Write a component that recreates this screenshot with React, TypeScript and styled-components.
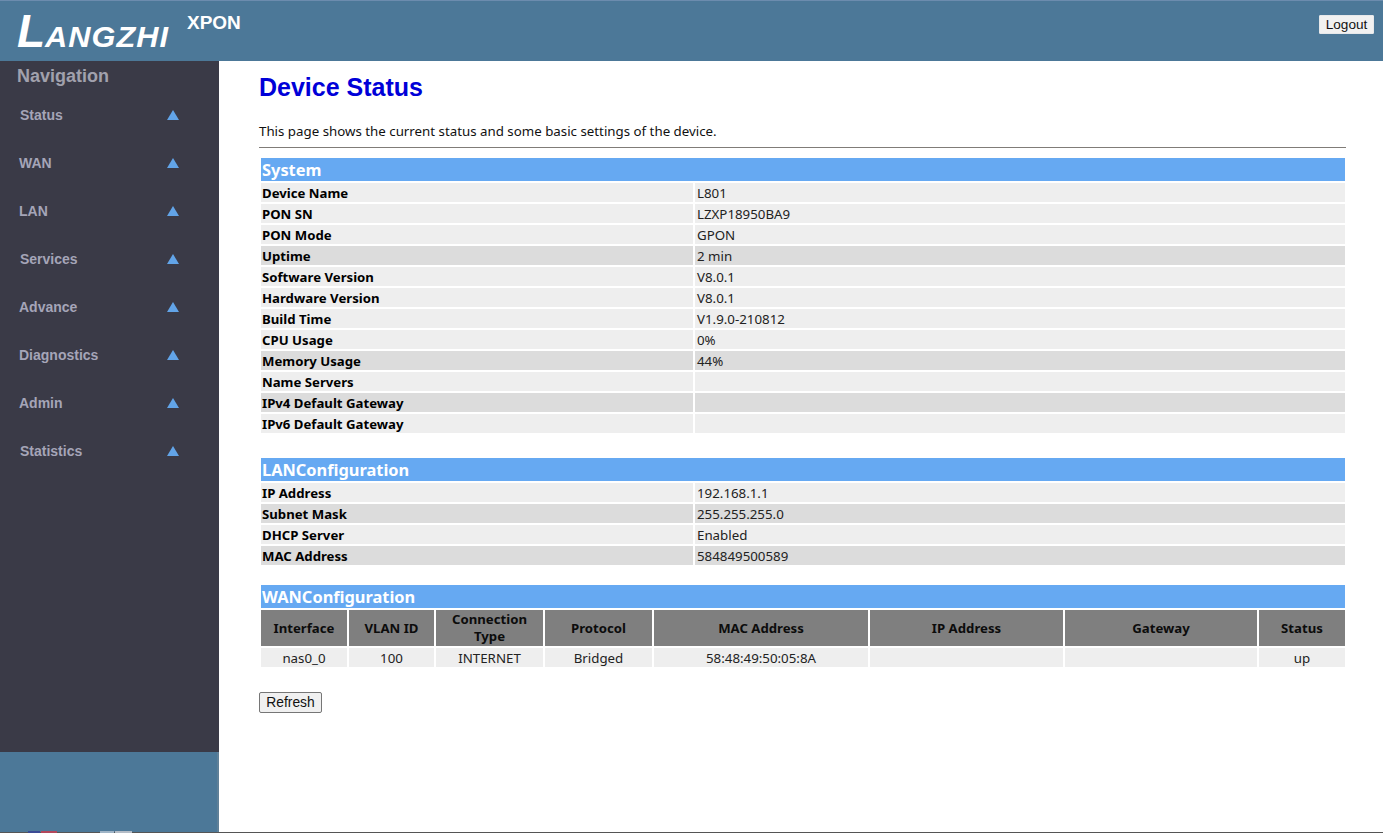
import React from 'react'
import styled, { createGlobalStyle } from 'styled-components'

const GlobalStyle = createGlobalStyle`
  html, body {
    margin: 0;
    padding: 0;
    height: 100%;
    background: #fff;
    overflow: hidden;
  }
`

const menuItems: { label: string; indent: number }[] = [
  { label: 'Status', indent: 20 },
  { label: 'WAN', indent: 19 },
  { label: 'LAN', indent: 19 },
  { label: 'Services', indent: 20 },
  { label: 'Advance', indent: 19 },
  { label: 'Diagnostics', indent: 19 },
  { label: 'Admin', indent: 19 },
  { label: 'Statistics', indent: 20 },
]

type Row = { name: string; value: string; dark?: boolean }

const systemRows: Row[] = [
  { name: 'Device Name', value: 'L801' },
  { name: 'PON SN', value: 'LZXP18950BA9' },
  { name: 'PON Mode', value: 'GPON' },
  { name: 'Uptime', value: '2 min', dark: true },
  { name: 'Software Version', value: 'V8.0.1' },
  { name: 'Hardware Version', value: 'V8.0.1' },
  { name: 'Build Time', value: 'V1.9.0-210812' },
  { name: 'CPU Usage', value: '0%' },
  { name: 'Memory Usage', value: '44%', dark: true },
  { name: 'Name Servers', value: '' },
  { name: 'IPv4 Default Gateway', value: '', dark: true },
  { name: 'IPv6 Default Gateway', value: '' },
]

const lanRows: Row[] = [
  { name: 'IP Address', value: '192.168.1.1' },
  { name: 'Subnet Mask', value: '255.255.255.0', dark: true },
  { name: 'DHCP Server', value: 'Enabled' },
  { name: 'MAC Address', value: '584849500589', dark: true },
]

const wanColumns = [
  { title: 'Interface', width: 86, value: 'nas0_0' },
  { title: 'VLAN ID', width: 85, value: '100' },
  { title: 'Connection Type', width: 107, value: 'INTERNET' },
  { title: 'Protocol', width: 107, value: 'Bridged' },
  { title: 'MAC Address', width: 214, value: '58:48:49:50:05:8A' },
  { title: 'IP Address', width: 193, value: '' },
  { title: 'Gateway', width: 192, value: '' },
  { title: 'Status', width: 86, value: 'up' },
]

const InfoTable: React.FC<{ title: string; rows: Row[]; gap: number }> = ({ title, rows, gap }) => (
  <Table $gap={gap}>
    <colgroup>
      <col width={432} />
      <col />
    </colgroup>
    <tbody>
      <tr>
        <TitleCell colSpan={2}>{title}</TitleCell>
      </tr>
      {rows.map((row) => (
        <tr key={row.name}>
          <NameCell $dark={row.dark}>{row.name}</NameCell>
          <ValueCell $dark={row.dark}>{row.value}</ValueCell>
        </tr>
      ))}
    </tbody>
  </Table>
)

const App: React.FC = () => {
  return (
    <Page>
      <GlobalStyle />
      <Header>
        <Brand>
          <Logo>
            <LogoInitial>L</LogoInitial>
            <LogoRest>angZHI</LogoRest>
          </Logo>
          <Product>XPON</Product>
        </Brand>
        <LogoutButton>Logout</LogoutButton>
      </Header>
      <Body>
        <Sidebar>
          <Nav>
            <NavTitle>Navigation</NavTitle>
            {menuItems.map((item) => (
              <NavItem key={item.label}>
                <NavLabel $indent={item.indent}>{item.label}</NavLabel>
                <Arrow />
              </NavItem>
            ))}
          </Nav>
          <SideFooter>
            <FooterStrip>
              <StripBar $width={12} $color="#3b4a94" />
              <StripBar $width={16} $color="#b3465a" />
              <StripGap />
              <StripBar $width={14} $color="#9fb4c6" />
              <StripBar $width={17} $color="#b4bcc6" />
            </FooterStrip>
          </SideFooter>
        </Sidebar>
        <Content>
          <Heading>Device Status</Heading>
          <Intro>This page shows the current status and some basic settings of the device.</Intro>
          <Rule />
          <InfoTable title="System" rows={systemRows} gap={0} />
          <InfoTable title="LANConfiguration" rows={lanRows} gap={21} />
          <Table $gap={16}>
            <colgroup>
              {wanColumns.map((col) => (
                <col key={col.title} width={col.width} />
              ))}
            </colgroup>
            <tbody>
              <tr>
                <TitleCell colSpan={wanColumns.length}>WANConfiguration</TitleCell>
              </tr>
              <tr>
                {wanColumns.map((col) => (
                  <HeadCell key={col.title}>{col.title}</HeadCell>
                ))}
              </tr>
              <tr>
                {wanColumns.map((col) => (
                  <DataCell key={col.title}>{col.value}</DataCell>
                ))}
              </tr>
            </tbody>
          </Table>
          <RefreshButton>Refresh</RefreshButton>
        </Content>
      </Body>
    </Page>
  )
}

const Page = styled.div`
  display: flex;
  flex-direction: column;
  width: 1383px;
  height: 833px;
  font-family: 'Noto Sans', Tahoma, sans-serif;
  border-bottom: 1px solid #555;
  box-sizing: border-box;
`

const Header = styled.header`
  display: flex;
  justify-content: space-between;
  align-items: flex-start;
  height: 61px;
  flex: none;
  box-sizing: border-box;
  background: #4c7898;
  border-top: 1px solid #6c8cae;
  padding: 14px 16px 0 17px;
`

const Brand = styled.div`
  display: flex;
  align-items: flex-start;
`

const Logo = styled.span`
  display: flex;
  align-items: baseline;
  width: 153px;
  height: 36px;
  padding-top: 1px;
  box-sizing: border-box;
  color: #fff;
  font-family: 'Liberation Sans', Arial, sans-serif;
  font-style: italic;
  font-weight: bold;
  white-space: nowrap;
`

const LogoInitial = styled.span`
  font-size: 46px;
  line-height: 36px;
  margin-top: -3px;
`

const LogoRest = styled.span`
  display: inline-block;
  font-size: 29px;
  line-height: 36px;
  letter-spacing: 1px;
  text-transform: uppercase;
  transform: scaleX(1.06);
  transform-origin: left center;
`

const Product = styled.span`
  display: block;
  margin: -3px 0 0 17px;
  color: #fff;
  font-family: 'Liberation Sans', Arial, sans-serif;
  font-size: 19px;
  line-height: 22px;
  font-weight: bold;
`

const LogoutButton = styled.button`
  width: 55px;
  height: 19px;
  padding: 0;
  margin-right: -7px;
  background: #f1f1f1;
  border: 1px solid #e6e8ea;
  border-radius: 1px;
  color: #111;
  font-family: 'Liberation Sans', Arial, sans-serif;
  font-size: 13.6px;
`

const Body = styled.div`
  display: flex;
  flex: 1;
  min-height: 0;
`

const Sidebar = styled.aside`
  display: flex;
  flex-direction: column;
  width: 219px;
  flex: none;
`

const Nav = styled.nav`
  height: 691px;
  flex: none;
  background: #3a3a47;
  font-family: 'Liberation Sans', Arial, sans-serif;
`

const NavTitle = styled.div`
  padding: 4px 0 0 17px;
  height: 26px;
  color: #a1a1ad;
  font-size: 18px;
  line-height: 22px;
  font-weight: bold;
`

const NavItem = styled.div`
  display: flex;
  justify-content: space-between;
  align-items: center;
  height: 48px;
  padding-right: 40px;
`

const NavLabel = styled.span<{ $indent: number }>`
  padding-left: ${(props) => props.$indent}px;
  color: #a5a5b8;
  font-size: 14px;
  font-weight: bold;
`

const Arrow = styled.span`
  width: 0;
  height: 0;
  border-left: 6px solid transparent;
  border-right: 6px solid transparent;
  border-bottom: 10px solid #62a4e8;
`

const SideFooter = styled.div`
  display: flex;
  flex: 1;
  align-items: flex-end;
  background: #4c7898;
  border-right: 2px solid #5f8098;
`

const FooterStrip = styled.div`
  display: flex;
  gap: 1px;
  height: 2px;
  margin-bottom: -1px;
  padding-left: 28px;
`

const StripBar = styled.span<{ $width: number; $color: string }>`
  width: ${(props) => props.$width}px;
  background: ${(props) => props.$color};
`

const StripGap = styled.span`
  width: 41px;
`

const Content = styled.main`
  flex: 1;
  min-width: 0;
  padding: 0 37px 0 40px;
  background: #fff;
  color: #000;
`

const Heading = styled.h1`
  margin: 0;
  padding-top: 10px;
  color: #0000d8;
  font-family: 'Liberation Sans', Arial, sans-serif;
  font-size: 25px;
  line-height: 32px;
  font-weight: bold;
`

const Intro = styled.p`
  margin: 18px 0 0;
  font-size: 13.3px;
  line-height: 20px;
  color: #111;
`

const Rule = styled.div`
  height: 1px;
  margin-top: 6px;
  background: #807c78;
`

const Table = styled.table<{ $gap: number }>`
  width: 1088px;
  margin-top: ${(props) => props.$gap}px;
  table-layout: fixed;
  border-collapse: separate;
  border-spacing: 2px;
  font-size: 13.3px;
  line-height: 18px;

  &:first-of-type {
    margin-top: 8px;
  }

  td, th {
    padding: 0;
  }
`

const TitleCell = styled.td`
  height: 23px;
  padding: 0 0 0 1px !important;
  background: #66a9f2;
  color: #fff;
  font-size: 16.4px;
  font-weight: bold;
  line-height: 23px;
`

const NameCell = styled.td<{ $dark?: boolean }>`
  height: 18px;
  padding: 1px 0 0 1px !important;
  background: ${(props) => (props.$dark ? '#dcdcdc' : '#eeeeee')};
  font-size: 13.2px;
  font-weight: bold;
  white-space: nowrap;
`

const ValueCell = styled.td<{ $dark?: boolean }>`
  height: 18px;
  padding: 1px 0 0 2px !important;
  background: ${(props) => (props.$dark ? '#dcdcdc' : '#eeeeee')};
  color: #222;
`

const HeadCell = styled.td`
  height: 36px;
  background: #7f7f7f;
  font-size: 13.2px;
  font-weight: bold;
  line-height: 17px;
  text-align: center;
  color: #0c0c0c;
`

const DataCell = styled.td`
  height: 18px;
  padding-top: 1px !important;
  background: #eeeeee;
  color: #222;
  text-align: center;
`

const RefreshButton = styled.button`
  display: block;
  width: 63px;
  height: 21px;
  margin-top: 23px;
  padding: 0;
  background: #f0f0f0;
  border: 1px solid #767676;
  border-radius: 2px;
  color: #111;
  font-family: 'Liberation Sans', Arial, sans-serif;
  font-size: 13.8px;
`

export default App
